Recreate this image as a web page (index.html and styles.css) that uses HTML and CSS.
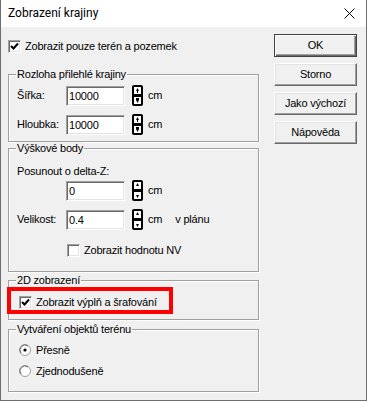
FILE: index.html
```html
<!DOCTYPE html>
<html lang="cs">
<head>
    <meta charset="UTF-8">
    <title>Zobrazení krajiny</title>
    <link rel="stylesheet" href="styles.css">
</head>
<body>
    <div class="window">
        <div class="titlebar">
            <span class="title">Zobrazení krajiny</span>
            <svg class="close" width="11" height="11" viewBox="0 0 11 11">
                <path d="M0.5 0.5L10.5 10.5M10.5 0.5L0.5 10.5" stroke="#000" stroke-width="1" fill="none"/>
            </svg>
        </div>

        <div class="client">
            <div class="left">
                <div class="check top-check">
                    <span class="box"><svg width="9" height="9" viewBox="0 0 9 9"><path d="M1 4L3.5 6.5L8 1.5" stroke="#000" stroke-width="2" fill="none"/></svg></span>
                    <span>Zobrazit pouze terén a pozemek</span>
                </div>

                <div class="group g-area">
                    <span class="legend">Rozloha přilehlé krajiny</span>
                    <div class="field">
                        <span class="lbl">Šířka:</span>
                        <span class="edit">10000</span>
                        <svg class="spin" width="11" height="21" viewBox="0 0 11 21">
                            <rect x="0" y="0" width="11" height="21" rx="2" fill="#000"/>
                            <rect x="2" y="2" width="7" height="7" fill="#fff"/>
                            <rect x="2" y="12" width="7" height="7" fill="#fff"/>
                            <path d="M5.5 3L7 6H4z" fill="#000"/>
                            <rect x="5" y="5" width="1" height="3" fill="#000"/>
                            <path d="M5.5 18L7 15H4z" fill="#000"/>
                            <rect x="4" y="13" width="3" height="2" fill="#000"/>
                        </svg>
                        <span class="unit">cm</span>
                    </div>
                    <div class="field">
                        <span class="lbl">Hloubka:</span>
                        <span class="edit">10000</span>
                        <svg class="spin" width="11" height="21" viewBox="0 0 11 21">
                            <rect x="0" y="0" width="11" height="21" rx="2" fill="#000"/>
                            <rect x="2" y="2" width="7" height="7" fill="#fff"/>
                            <rect x="2" y="12" width="7" height="7" fill="#fff"/>
                            <path d="M5.5 3L7 6H4z" fill="#000"/>
                            <rect x="5" y="5" width="1" height="3" fill="#000"/>
                            <path d="M5.5 18L7 15H4z" fill="#000"/>
                            <rect x="4" y="13" width="3" height="2" fill="#000"/>
                        </svg>
                        <span class="unit">cm</span>
                    </div>
                </div>

                <div class="group g-points">
                    <span class="legend">Výškové body</span>
                    <div class="caption">Posunout o delta-Z:</div>
                    <div class="field indent">
                        <span class="edit">0</span>
                        <svg class="spin" width="11" height="21" viewBox="0 0 11 21">
                            <rect x="0" y="0" width="11" height="21" rx="2" fill="#000"/>
                            <rect x="2" y="2" width="7" height="7" fill="#fff"/>
                            <rect x="2" y="12" width="7" height="7" fill="#fff"/>
                            <path d="M5.5 3L7 6H4z" fill="#000"/>
                            <path d="M5.5 18L7 15H4z" fill="#000"/>
                        </svg>
                        <span class="unit">cm</span>
                    </div>
                    <div class="field">
                        <span class="lbl">Velikost:</span>
                        <span class="edit">0.4</span>
                        <svg class="spin" width="11" height="21" viewBox="0 0 11 21">
                            <rect x="0" y="0" width="11" height="21" rx="2" fill="#000"/>
                            <rect x="2" y="2" width="7" height="7" fill="#fff"/>
                            <rect x="2" y="12" width="7" height="7" fill="#fff"/>
                            <path d="M5.5 3L7 6H4z" fill="#000"/>
                            <path d="M5.5 18L7 15H4z" fill="#000"/>
                        </svg>
                        <span class="unit">cm</span>
                        <span class="plan">v plánu</span>
                    </div>
                    <div class="check nv-check">
                        <span class="box"></span>
                        <span>Zobrazit hodnotu NV</span>
                    </div>
                </div>

                <div class="group g-2d">
                    <span class="legend">2D zobrazení</span>
                    <div class="check">
                        <span class="box"><svg width="9" height="9" viewBox="0 0 9 9"><path d="M1 4L3.5 6.5L8 1.5" stroke="#000" stroke-width="2" fill="none"/></svg></span>
                        <span>Zobrazit výplň a šrafování</span>
                    </div>
                    <div class="highlight"></div>
                </div>

                <div class="group g-terrain">
                    <span class="legend">Vytváření objektů terénu</span>
                    <div class="radio">
                        <svg width="12" height="12" viewBox="0 0 12 12">
                            <circle cx="6" cy="6" r="5.5" fill="#fff" stroke="#a0a0a0"/>
                            <path d="M2 9A5 5 0 0 1 9 2" stroke="#696969" fill="none"/>
                            <circle cx="6" cy="6" r="1.6" fill="#000"/>
                        </svg>
                        <span>Přesně</span>
                    </div>
                    <div class="radio">
                        <svg width="12" height="12" viewBox="0 0 12 12">
                            <circle cx="6" cy="6" r="5.5" fill="#fff" stroke="#a0a0a0"/>
                            <path d="M2 9A5 5 0 0 1 9 2" stroke="#696969" fill="none"/>
                        </svg>
                        <span>Zjednodušeně</span>
                    </div>
                </div>
            </div>

            <div class="buttons">
                <button class="btn default">OK</button>
                <button class="btn">Storno</button>
                <button class="btn">Jako výchozí</button>
                <button class="btn">Nápověda</button>
            </div>
        </div>
    </div>
</body>
</html>
```

FILE: styles.css
```css
* {
    box-sizing: border-box;
}

body {
    margin: 0;
    background: #fff;
}

.window {
    width: 367px;
    height: 401px;
    border: 1px solid #6f6f6f;
    border-top: none;
    background: #f0f0f0;
    font-family: "Liberation Sans", Arial, sans-serif;
    font-size: 11px;
    letter-spacing: -0.2px;
    line-height: 13px;
    color: #000;
}

.titlebar {
    height: 27px;
    background: #fff;
    display: flex;
    align-items: center;
    justify-content: space-between;
    padding: 0 11px 0 7px;
    letter-spacing: 0;
}

.title {
    font-family: Roboto, sans-serif;
    font-size: 12px;
}

.client {
    display: flex;
    gap: 15px;
    padding: 7px 0 0 7px;
}

.left {
    width: 251px;
    display: flex;
    flex-direction: column;
}

.check {
    display: flex;
    align-items: center;
    gap: 4px;
    height: 13px;
}

.box {
    width: 13px;
    height: 13px;
    border: 1px solid;
    border-color: #a0a0a0 #fff #fff #a0a0a0;
    box-shadow: inset 1px 1px 0 #696969, inset -1px -1px 0 #e3e3e3;
    background: #fff;
    display: flex;
    align-items: center;
    justify-content: center;
}

.top-check {
    margin-top: 6px;
}

.group {
    position: relative;
    width: 251px;
    border: 1px solid #a0a0a0;
    box-shadow: inset 1px 1px 0 #fff, 1px 1px 0 #fff;
    padding-left: 8px;
}

.legend {
    position: absolute;
    top: -7px;
    left: 7px;
    padding: 0 1px;
    background: #f0f0f0;
}

.g-area {
    margin-top: 21px;
    height: 68px;
    padding-top: 10px;
}

.field {
    display: flex;
    align-items: center;
    height: 21px;
}

.field + .field {
    margin-top: 8px;
}

.lbl {
    width: 49px;
}

.indent {
    padding-left: 49px;
}

.edit {
    width: 59px;
    height: 20px;
    border: 1px solid;
    border-color: #a0a0a0 #fff #fff #a0a0a0;
    box-shadow: inset 1px 1px 0 #696969, inset -1px -1px 0 #e3e3e3;
    background: #fff;
    padding: 3px 0 0 2px;
}

.spin {
    margin-left: 7px;
}

.unit {
    margin-left: 5px;
}

.plan {
    margin-left: 13px;
}

.g-points {
    margin-top: 6px;
    height: 124px;
    padding-top: 16px;
}

.caption {
    margin-bottom: 2px;
}

.nv-check {
    margin: 14px 0 0 50px;
}

.g-2d {
    margin-top: 8px;
    height: 40px;
    padding: 15px 0 0 10px;
}

.highlight {
    position: absolute;
    left: -2px;
    top: 6px;
    width: 166px;
    height: 27px;
    border: 4px solid #ff0000;
}

.g-terrain {
    margin-top: 9px;
    height: 63px;
    padding: 14px 0 0 10px;
}

.radio {
    display: flex;
    align-items: center;
    gap: 5px;
    height: 12px;
}

.radio + .radio {
    margin-top: 9px;
}

.buttons {
    display: flex;
    flex-direction: column;
    gap: 6px;
}

.btn {
    width: 83px;
    height: 23px;
    padding: 0;
    font: inherit;
    letter-spacing: inherit;
    color: #000;
    background: #f0f0f0;
    border: 1px solid;
    border-color: #fff #696969 #696969 #fff;
    box-shadow: inset -1px -1px 0 #a0a0a0, inset 1px 1px 0 #e3e3e3;
}

.btn.default {
    border-color: #404040;
    box-shadow: inset 1px 1px 0 #fff, inset -1px -1px 0 #696969, inset -2px -2px 0 #a0a0a0;
}
```
